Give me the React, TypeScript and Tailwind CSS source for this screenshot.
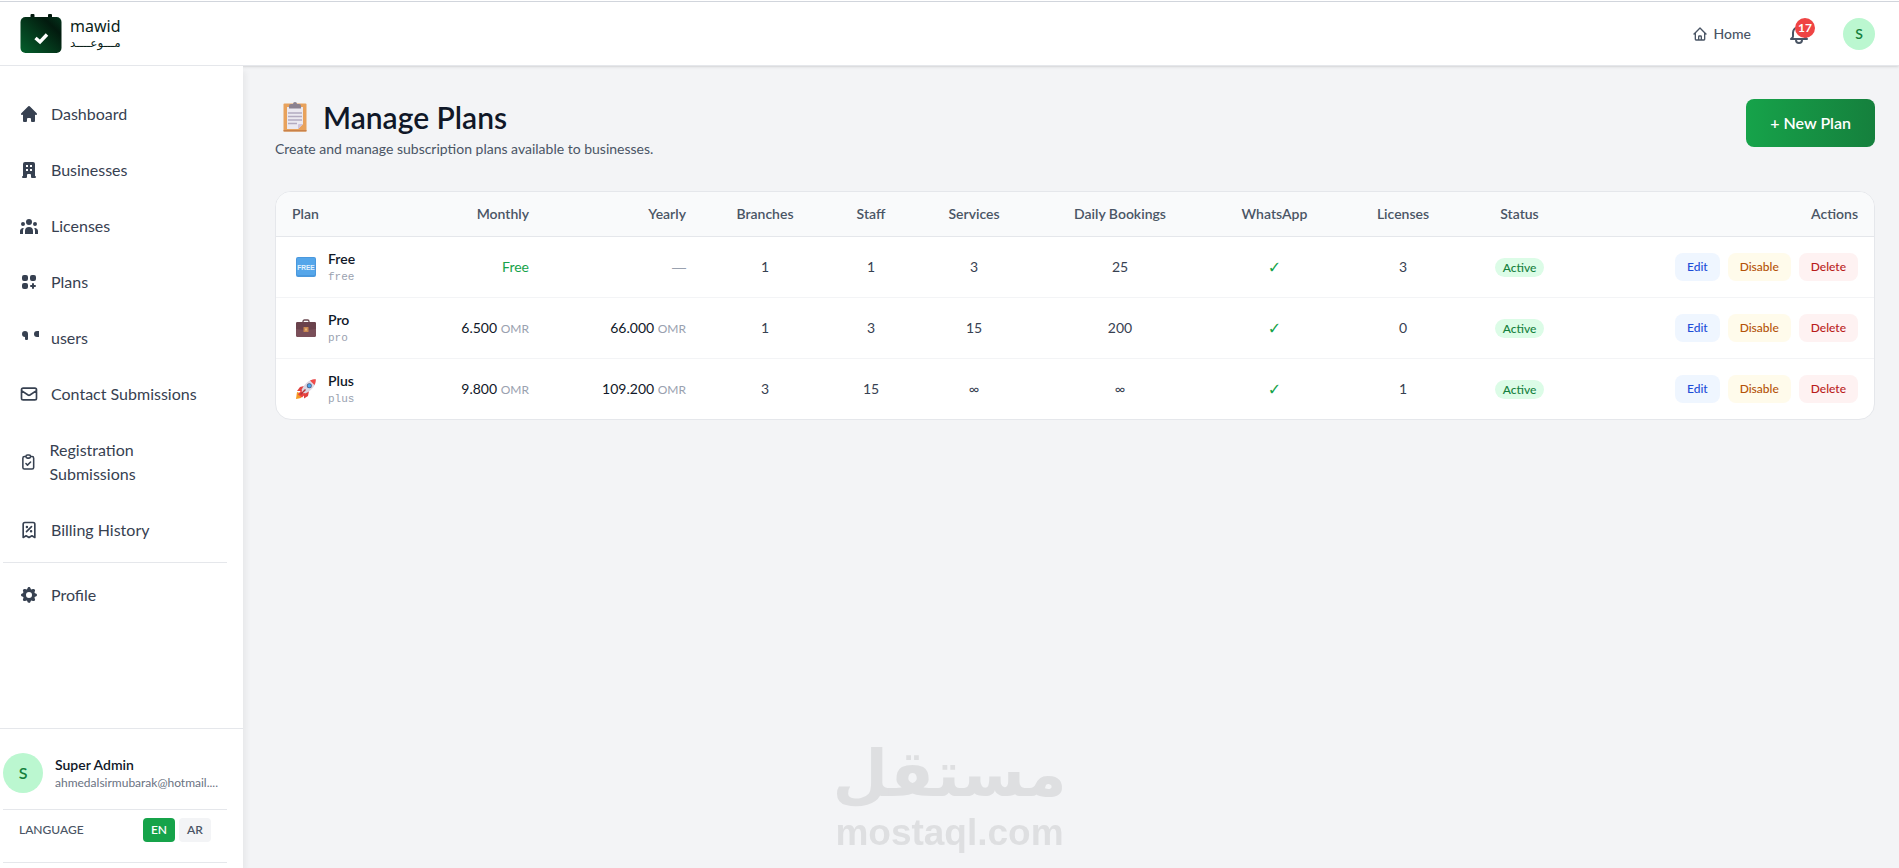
import { useState, type ReactNode } from 'react'
import {
  HiHome,
  HiOfficeBuilding,
  HiUserGroup,
  HiViewGridAdd,
  HiCog,
  HiOutlineMail,
  HiOutlineClipboardCheck,
  HiOutlineReceiptTax,
  HiOutlineHome,
  HiOutlineBell,
} from 'react-icons/hi'

interface NavItem {
  label: string
  icon: ReactNode
}

interface Plan {
  name: string
  slug: string
  icon: ReactNode
  monthly: string | null
  yearly: string | null
  branches: string
  staff: string
  services: string
  bookings: string
  licenses: string
}

function UsersIcon() {
  return (
    <svg viewBox="0 0 20 20" className="size-5" fill="currentColor" aria-hidden="true">
      <path d="M6 3a3 3 0 0 1 3 3v5a1 1 0 0 1-1 1H7a1 1 0 0 1-1-1V9a3 3 0 0 1 0-6z" />
      <path d="M18 3h2v6h-2a3 3 0 0 1 0-6z" />
    </svg>
  )
}

function LogoMark() {
  return (
    <svg viewBox="0 0 42 40" className="h-10 w-[42px]" aria-hidden="true">
      <defs>
        <linearGradient id="logo-bg" x1="0" y1="1" x2="1" y2="0.1">
          <stop offset="0" stopColor="#04602c" />
          <stop offset="0.45" stopColor="#043a1c" />
          <stop offset="0.8" stopColor="#021a0e" />
          <stop offset="1" stopColor="#03301a" />
        </linearGradient>
      </defs>
      <rect x="10.5" y="0" width="4" height="6" rx="1" fill="#02180d" />
      <rect x="28" y="0" width="4" height="6" rx="1" fill="#02180d" />
      <rect x="0.5" y="3" width="41" height="36" rx="5" fill="url(#logo-bg)" />
      <path d="M15.5 24l4.500 4 7-7.500" fill="none" stroke="#fff" strokeWidth="3.400" />
    </svg>
  )
}

function ClipboardEmoji() {
  return (
    <svg viewBox="0 0 24 30" className="h-[30px] w-6" aria-hidden="true">
      <rect x="0.5" y="1.5" width="23" height="28" rx="1" fill="#e8a25c" />
      <path d="M0.5 28h23v1.5h-23z" fill="#c9824a" />
      <path d="M4 5h16v17l-5 5H4z" fill="#ebe9f0" />
      <path d="M20 22l-5 5v-4a1 1 0 0 1 1-1z" fill="#cfc4dc" />
      <path d="M6 6.5V4a2 2 0 0 1 2-2h2a2 2 0 0 1 4 0h2a2 2 0 0 1 2 2v2.5z" fill="#8b8290" />
      <path d="M5 11h14M5 14.5h14M5 18h14M5 21.5h9" stroke="#b3abc0" strokeWidth="1.3" />
    </svg>
  )
}

function FreeEmoji() {
  return (
    <svg viewBox="0 0 20 20" className="size-5" aria-hidden="true">
      <rect width="20" height="20" rx="2" fill="#4a98dd" />
      <rect x="1" y="1" width="18" height="17" rx="1" fill="#55a6ea" />
      <text x="10" y="12.6" textAnchor="middle" fontFamily="Liberation Sans, sans-serif" fontSize="6.5" fontWeight="700" fill="#e6f3fd">
        FREE
      </text>
    </svg>
  )
}

function BriefcaseEmoji() {
  return (
    <svg viewBox="0 0 20 20" className="size-5" aria-hidden="true">
      <path d="M7 4.5V3.4A1.4 1.4 0 0 1 8.4 2h3.2A1.4 1.4 0 0 1 13 3.4v1.1" fill="none" stroke="#6b4a52" strokeWidth="1.3" />
      <rect x="0" y="4" width="20" height="15" rx="1.5" fill="#7a4f59" />
      <path d="M0 5.5A1.5 1.5 0 0 1 1.5 4h17A1.5 1.5 0 0 1 20 5.5V11l-8 1H8l-8-1z" fill="#6a424c" />
      <rect x="7.5" y="9" width="5" height="5" rx="0.5" fill="#c98850" />
      <rect x="9" y="10.5" width="2" height="2" fill="#e6b27a" />
    </svg>
  )
}

function RocketEmoji() {
  return (
    <svg viewBox="0 0 20 20" className="size-5" aria-hidden="true">
      <path d="M1 13l3 1 2 3-1 2-5 1z" fill="#f59a23" />
      <path d="M8 7L4 8l-3 4 5 0zM13 12l-1 5-4 2.5V14z" fill="#e0413f" />
      <path d="M5 11.5l4 4-3 3-2-1.5-2-1.5z" fill="#e8413f" />
      <path d="M19.8 0.2C14 0 9 3.5 5.5 11L9 14.500C16.5 11 20 6 19.8 0.2z" fill="#dcd6e3" />
      <path d="M19.8 0.2c-2.3 0-4 .4-5.800 1.300l4.500 4.500c.9-1.800 1.300-3.500 1.300-5.800z" fill="#f04a48" />
      <circle cx="13.3" cy="6.7" r="2.5" fill="#4b5f84" />
      <circle cx="13.3" cy="6.7" r="1.7" fill="#4aa8f0" />
      <path d="M4.5 15.5l5-5" stroke="#b23538" strokeWidth="1.4" />
    </svg>
  )
}

const iconClass = 'size-5'

const NAV: NavItem[] = [
  { label: 'Dashboard', icon: <HiHome className={iconClass} /> },
  { label: 'Businesses', icon: <HiOfficeBuilding className={iconClass} /> },
  { label: 'Licenses', icon: <HiUserGroup className={iconClass} /> },
  { label: 'Plans', icon: <HiViewGridAdd className={iconClass} /> },
  { label: 'users', icon: <UsersIcon /> },
  { label: 'Contact Submissions', icon: <HiOutlineMail className={iconClass} /> },
  { label: 'Registration Submissions', icon: <HiOutlineClipboardCheck className={iconClass} /> },
  { label: 'Billing History', icon: <HiOutlineReceiptTax className={iconClass} /> },
]

const PLANS: Plan[] = [
  { name: 'Free', slug: 'free', icon: <FreeEmoji />, monthly: null, yearly: null, branches: '1', staff: '1', services: '3', bookings: '25', licenses: '3' },
  { name: 'Pro', slug: 'pro', icon: <BriefcaseEmoji />, monthly: '6.500', yearly: '66.000', branches: '1', staff: '3', services: '15', bookings: '200', licenses: '0' },
  { name: 'Plus', slug: 'plus', icon: <RocketEmoji />, monthly: '9.800', yearly: '109.200', branches: '3', staff: '15', services: '∞', bookings: '∞', licenses: '1' },
]

function NavLink({ label, icon }: NavItem) {
  return (
    <a href="#" className="flex items-center gap-3 p-4 text-base text-[#374151] hover:bg-gray-50">
      {icon}
      <span>{label}</span>
    </a>
  )
}

function Price({ value }: { value: string }) {
  return (
    <>
      <span className="text-gray-900">{value}</span> <span className="text-xs text-gray-400">OMR</span>
    </>
  )
}

function Header() {
  return (
    <header className="relative z-10 bg-white pt-px shadow-sm">
      <div className="flex h-[65px] items-center justify-between border-t border-b border-t-gray-300 border-b-gray-200 pr-6 pl-5">
        <a href="#" className="flex items-center gap-2">
          <LogoMark />
          <span className="flex flex-col text-[#0b1f1a]">
            <span className="font-['Noto_Sans'] text-base leading-[18px]">mawid</span>
            <span className="font-['DejaVu_Sans'] text-xs leading-4" dir="rtl">مـــوعــــد</span>
          </span>
        </a>
        <div className="flex items-center">
          <a href="#" className="flex items-center gap-1.5 text-sm font-medium text-gray-600">
            <HiOutlineHome className="size-4" />
            Home
          </a>
          <button type="button" aria-label="Notifications" className="relative ml-9 text-gray-600">
            <HiOutlineBell className="size-6" />
            <span className="absolute -top-1 -right-1 flex size-5 items-center justify-center rounded-full bg-[#ef4444] text-xs font-bold text-white">17</span>
          </button>
          <button type="button" aria-label="Account" className="ml-8 size-8 rounded-full bg-[#bbf7d0] text-sm font-semibold text-[#15803d]">
            S
          </button>
        </div>
      </div>
    </header>
  )
}

function Sidebar() {
  const [lang, setLang] = useState('EN')
  return (
    <aside className="relative z-20 flex w-[243px] shrink-0 flex-col bg-white shadow-[4px_4px_6px_-1px_rgba(0,0,0,0.05)]">
      <nav className="flex-1 pt-5 pr-4 pl-[3px]">
        {NAV.map(item => (
          <NavLink key={item.label} {...item} />
        ))}
        <hr className="my-1 border-gray-200" />
        <NavLink label="Profile" icon={<HiCog className={iconClass} />} />
      </nav>
      <div className="h-[140px] overflow-hidden border-t border-gray-200 pt-6 pr-4 pl-[3px]">
        <div className="flex items-center gap-3 pb-4">
          <div className="flex size-10 shrink-0 items-center justify-center rounded-full bg-[#bbf7d0] font-semibold text-[#15803d]">S</div>
          <div className="min-w-0">
            <p className="text-sm font-semibold text-gray-900">Super Admin</p>
            <p className="truncate text-xs text-gray-500">ahmedalsirmubarak@hotmail....</p>
          </div>
        </div>
        <div className="flex items-center justify-between border-t border-gray-200 px-4 pt-2 pb-5">
          <span className="text-xs font-medium text-gray-600">LANGUAGE</span>
          <div className="flex gap-1">
            {['EN', 'AR'].map(l => (
              <button
                key={l}
                type="button"
                onClick={() => setLang(l)}
                className={`h-6 w-8 rounded text-xs font-semibold ${lang === l ? 'bg-[#16a34a] text-white' : 'bg-gray-100 text-gray-600'}`}
              >
                {l}
              </button>
            ))}
          </div>
        </div>
        <hr className="border-gray-200" />
      </div>
    </aside>
  )
}

function PlansTable() {
  return (
    <div className="mt-8 overflow-hidden rounded-2xl border border-gray-200 bg-white">
      <table className="w-full table-fixed text-sm">
        <colgroup>
          <col className="w-[130px]" />
          <col className="w-[139px]" />
          <col className="w-[157px]" />
          <col className="w-[126px]" />
          <col className="w-[86px]" />
          <col className="w-[120px]" />
          <col className="w-[172px]" />
          <col className="w-[137px]" />
          <col className="w-[120px]" />
          <col className="w-[113px]" />
          <col className="w-[298px]" />
        </colgroup>
        <thead>
          <tr className="border-b border-gray-200 bg-gray-50 text-center text-gray-600 [&>th]:px-4 [&>th]:py-3 [&>th]:font-semibold">
            <th className="text-left">Plan</th>
            <th className="text-right">Monthly</th>
            <th className="text-right">Yearly</th>
            <th>Branches</th>
            <th>Staff</th>
            <th>Services</th>
            <th>Daily Bookings</th>
            <th>WhatsApp</th>
            <th>Licenses</th>
            <th>Status</th>
            <th className="text-right">Actions</th>
          </tr>
        </thead>
        <tbody>
          {PLANS.map(p => (
            <tr key={p.slug} className="border-b border-gray-100 text-center text-[#374151] last:border-0 [&>td]:px-4 [&>td]:py-3">
              <td>
                <div className="flex items-center gap-3 pl-1 text-left">
                  {p.icon}
                  <div>
                    <p className="font-semibold text-gray-900">{p.name}</p>
                    <p className="font-['Liberation_Mono'] text-[11px] leading-4 text-gray-400">{p.slug}</p>
                  </div>
                </div>
              </td>
              <td className="text-right">
                {p.monthly ? <Price value={p.monthly} /> : <span className="text-[#16a34a]">Free</span>}
              </td>
              <td className="text-right">
                {p.yearly ? <Price value={p.yearly} /> : <span className="font-['Liberation_Sans'] text-gray-400">—</span>}
              </td>
              <td>{p.branches}</td>
              <td>{p.staff}</td>
              <td>{p.services}</td>
              <td>{p.bookings}</td>
              <td className="text-base leading-5 text-[#16a34a]">✓</td>
              <td>{p.licenses}</td>
              <td>
                <span className="rounded-full bg-[#dcfce7] px-2 py-0.5 text-xs font-medium text-[#15803d]">Active</span>
              </td>
              <td>
                <div className="flex justify-end gap-2 text-xs font-medium">
                  <button type="button" className="rounded-lg bg-blue-50 px-3 py-1.5 text-[#1d4ed8]">Edit</button>
                  <button type="button" className="rounded-lg bg-amber-50 px-3 py-1.5 text-[#b45309]">Disable</button>
                  <button type="button" className="rounded-lg bg-red-50 px-3 py-1.5 text-[#b91c1c]">Delete</button>
                </div>
              </td>
            </tr>
          ))}
        </tbody>
      </table>
    </div>
  )
}

function Watermark() {
  return (
    <div className="pointer-events-none fixed bottom-3 left-1/2 z-30 flex -translate-x-1/2 flex-col items-center font-bold text-[#dedfe1]">
      <span className="font-['DejaVu_Sans'] text-[64px] leading-[72px]" dir="rtl">مستقل</span>
      <span className="font-['Liberation_Sans'] text-[37px] leading-[46px]">mostaql.com</span>
    </div>
  )
}

export default function App() {
  return (
    <div className="flex min-h-screen flex-col bg-gray-100 font-['Lato','DejaVu_Sans',sans-serif]">
      <Header />
      <div className="flex flex-1">
        <Sidebar />
        <main className="min-w-0 flex-1 pt-[33px] pr-6 pl-8">
          <div className="flex items-start justify-between">
            <div>
              <h1 className="flex items-center gap-4 pl-2 text-3xl font-semibold text-gray-900">
                <ClipboardEmoji />
                Manage Plans
              </h1>
              <p className="mt-1 text-sm text-gray-600">Create and manage subscription plans available to businesses.</p>
            </div>
            <button type="button" className="rounded-lg bg-linear-to-r from-[#16a34a] to-[#15803d] px-6 py-3 font-semibold text-white">
              + New Plan
            </button>
          </div>
          <PlansTable />
        </main>
      </div>
      <Watermark />
    </div>
  )
}
